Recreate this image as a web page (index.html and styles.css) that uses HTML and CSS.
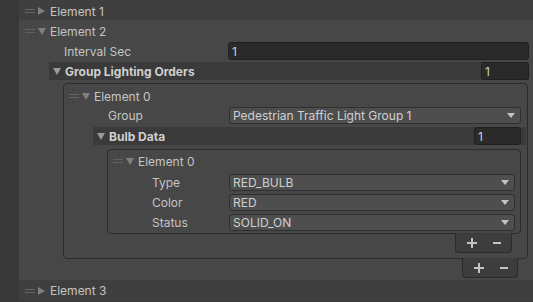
FILE: index.html
```html
<!DOCTYPE html>
<html lang="en">
<head>
  <meta charset="UTF-8" />
  <title>Inspector - Lighting Orders</title>
  <link rel="stylesheet" href="styles.css">
</head>
<body>
  <div class="inspector">

    <div class="item item-closed first">
      <div class="item-head"><span class="handle"></span><span class="fold"><i class="tri-right"></i></span><span class="name">Element 1</span></div>
    </div>

    <div class="item item-open">
      <div class="item-head"><span class="handle"></span><span class="fold"><i class="tri-down"></i></span><span class="name">Element 2</span></div>

      <div class="prop prop-top">
        <span class="label">Interval Sec</span>
        <span class="field">1</span>
      </div>

      <div class="list-head head-orders">
        <span class="fold"><i class="tri-down light"></i></span>
        <span class="title">Group Lighting Orders</span>
        <span class="field count">1</span>
      </div>

      <div class="list list-orders">
        <div class="list-box">
          <div class="item-head sub"><span class="handle"></span><span class="fold"><i class="tri-down"></i></span><span class="name">Element 0</span></div>

          <div class="prop prop-group">
            <span class="label">Group</span>
            <span class="dropdown">Pedestrian Traffic Light Group 1<i class="arrow"></i></span>
          </div>

          <div class="list-head head-bulbs">
            <span class="fold"><i class="tri-down light"></i></span>
            <span class="title">Bulb Data</span>
            <span class="field count">1</span>
          </div>

          <div class="list list-bulbs">
            <div class="list-box">
              <div class="item-head sub"><span class="handle"></span><span class="fold"><i class="tri-down"></i></span><span class="name">Element 0</span></div>
              <div class="prop prop-bulb">
                <span class="label">Type</span>
                <span class="dropdown">RED_BULB<i class="arrow"></i></span>
              </div>
              <div class="prop prop-bulb">
                <span class="label">Color</span>
                <span class="dropdown">RED<i class="arrow"></i></span>
              </div>
              <div class="prop prop-bulb">
                <span class="label">Status</span>
                <span class="dropdown">SOLID_ON<i class="arrow"></i></span>
              </div>
            </div>
            <div class="list-foot">
              <span class="btn"><svg width="10" height="10" viewBox="0 0 10 10"><rect x="4" y="0" width="2" height="10"/><rect x="0" y="4" width="10" height="2"/></svg></span>
              <span class="btn"><svg width="10" height="10" viewBox="0 0 10 10"><rect x="1" y="4" width="8" height="2"/></svg></span>
            </div>
          </div>
        </div>
        <div class="list-foot">
          <span class="btn"><svg width="10" height="10" viewBox="0 0 10 10"><rect x="4" y="0" width="2" height="10"/><rect x="0" y="4" width="10" height="2"/></svg></span>
          <span class="btn"><svg width="10" height="10" viewBox="0 0 10 10"><rect x="1" y="4" width="8" height="2"/></svg></span>
        </div>
      </div>
    </div>

    <div class="item item-closed last">
      <div class="item-head"><span class="handle"></span><span class="fold"><i class="tri-right"></i></span><span class="name">Element 3</span></div>
    </div>

  </div>
</body>
</html>
```

FILE: styles.css
```css
* {
  margin: 0;
  padding: 0;
  box-sizing: border-box;
}

body {
  background: #383838;
  font-family: Inter, "Noto Sans", sans-serif;
  font-size: 12px;
  color: #c4c4c4;
  width: 533px;
  height: 302px;
  overflow: hidden;
}

.inspector {
  margin-left: 19px;
  width: 514px;
}

/* list rows */

.item-closed {
  background: #3f3f3f;
}

.item.first .item-head {
  height: 20px;
  padding-top: 2px;
}

.item.last .item-head {
  height: 21px;
}

.item-open {
  background: #474747;
  padding-bottom: 2px;
}

.item-head {
  display: flex;
  align-items: center;
  height: 22px;
  padding-left: 6px;
}

.item-head.sub {
  height: 20px;
  padding-left: 5px;
}

.handle {
  width: 10px;
  height: 4px;
  border-top: 1px solid #636363;
  border-bottom: 1px solid #636363;
}

.fold {
  width: 9px;
  margin-left: 2px;
  display: flex;
  align-items: center;
  justify-content: center;
}

.tri-right {
  width: 0;
  height: 0;
  border-left: 7px solid #7f7f7f;
  border-top: 4px solid transparent;
  border-bottom: 4px solid transparent;
}

.tri-down {
  width: 0;
  height: 0;
  border-top: 7px solid #7f7f7f;
  border-left: 4px solid transparent;
  border-right: 4px solid transparent;
}

.tri-down.light {
  border-top-color: #9a9a9a;
}

.name {
  margin-left: 4px;
}

/* properties */

.prop {
  display: flex;
  align-items: center;
}

.label {
  flex: none;
}

.prop-top {
  height: 18px;
  padding-left: 45px;
  padding-right: 4px;
}

.prop-top .label {
  width: 164px;
}

.prop-top .field {
  flex: 1;
  height: 18px;
}

.field {
  display: flex;
  align-items: center;
  background: #2a2a2a;
  border: 1px solid #202020;
  border-radius: 3px;
  padding-left: 3px;
  color: #d0d0d0;
}

.dropdown {
  flex: 1;
  display: flex;
  align-items: center;
  justify-content: space-between;
  height: 17px;
  background: #4e4e4e;
  border: 1px solid #2f2f2f;
  border-radius: 3px;
  padding-left: 3px;
  padding-right: 5px;
  color: #d0d0d0;
}

.arrow {
  width: 0;
  height: 0;
  border-top: 5px solid #c4c4c4;
  border-left: 4px solid transparent;
  border-right: 4px solid transparent;
}

.prop-group {
  margin-top: 1px;
  padding-left: 44px;
  padding-right: 6px;
}

.prop-group .label {
  width: 121px;
}

.prop-bulb {
  margin-top: 3px;
  padding-left: 44px;
  padding-right: 5px;
}

.prop-bulb:first-of-type {
  margin-top: 2px;
}

.prop-bulb .label {
  width: 77px;
}

/* list headers */

.list-head {
  display: flex;
  align-items: center;
  height: 18px;
  background: #3a3a3a;
  padding-left: 3px;
}

.list-head .fold {
  margin-left: 0;
}

.title {
  flex: 1;
  margin-left: 4px;
  font-weight: 700;
  color: #cfcfcf;
}

.count {
  height: 18px;
  width: 48px;
}

.head-orders {
  margin: 2px 4px 0 30px;
}

.head-bulbs {
  margin: 3px 1px 0 29px;
  padding-right: 5px;
}

.head-bulbs .count {
  width: 47px;
}

/* list boxes */

.list-box {
  border: 1px solid #2b2b2b;
  border-radius: 4px;
}

.list-orders {
  margin: 3px 5px 0 44px;
}

.list-orders > .list-box {
  padding-top: 2px;
  padding-bottom: 5px;
}

.list-bulbs {
  margin: 4px 6px 0 43px;
}

.list-bulbs > .list-box {
  padding-top: 1px;
  padding-bottom: 2px;
}

.list-bulbs .item-head.sub {
  height: 20px;
}

.list-foot {
  display: flex;
  width: 57px;
  height: 20px;
  margin-top: -1px;
  margin-left: auto;
  margin-right: 9px;
  padding-left: 3px;
  background: #3d3d3d;
  border: 1px solid #2b2b2b;
  border-top: none;
  border-radius: 0 0 4px 4px;
}

.list-orders > .list-foot {
  width: 56px;
  margin-right: 10px;
}

.btn {
  width: 25px;
  display: flex;
  align-items: center;
  justify-content: center;
}

.btn svg {
  fill: #c4c4c4;
}
```
